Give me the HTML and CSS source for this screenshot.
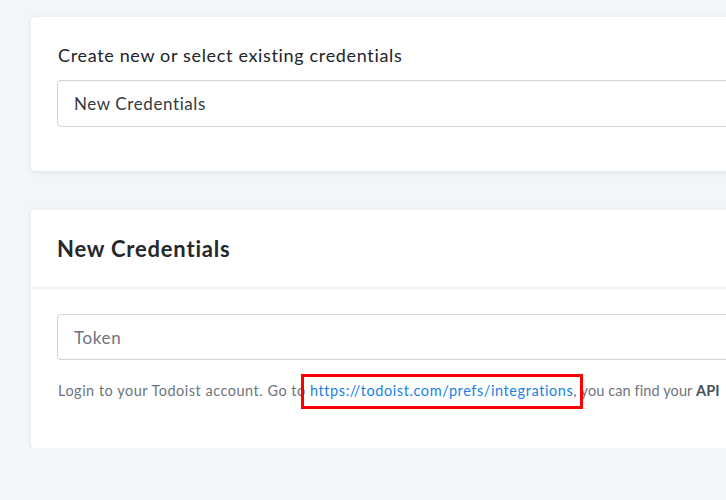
FILE: index.html
```html
<!DOCTYPE html>
<html>
<head>
<meta charset="utf-8">
<link rel="stylesheet" href="styles.css">
</head>
<body>
<div class="page">
  <section class="card card-select">
    <label class="field-label">Create new or select existing credentials</label>
    <div class="input">New Credentials</div>
  </section>
  <section class="card card-new">
    <header class="card-header">New Credentials</header>
    <div class="card-body">
      <div class="input placeholder">Token</div>
      <p class="help">Login to your Todoist account. Go to <span class="hl"><a href="#" class="link">https://todoist.com/prefs/integrations</a>,</span><span class="tail"> you can find your <b>API</b></span></p>
    </div>
  </section>
</div>
</body>
</html>
```
FILE: styles.css
```css
html, body {
  margin: 0;
  padding: 0;
  background: #f3f6f9;
  overflow: hidden;
  font-family: "Lato", "Open Sans", sans-serif;
}
.page {
  padding: 17px 0 0 31px;
  width: 900px;
}
.card {
  background: #fff;
  border-radius: 4px;
  box-shadow: 0 1px 5px rgba(40, 50, 70, 0.12);
}
.card-select {
  padding: 26px 26px 44px 26px;
  margin-bottom: 39px;
}
.field-label {
  display: block;
  font-size: 18px;
  line-height: 24px;
  letter-spacing: 0.66px;
  color: #212529;
  margin-bottom: 13px;
  padding-left: 1px;
}
.input {
  box-sizing: border-box;
  height: 47px;
  border: 1px solid #ced4da;
  border-radius: 4px;
  padding: 0 16px;
  display: flex;
  align-items: center;
  font-size: 17px;
  letter-spacing: 0.6px;
  color: #343a40;
}
.input.placeholder {
  color: #6c757d;
  height: 46px;
}
.card-header {
  height: 77px;
  display: flex;
  align-items: center;
  padding: 0 26px;
  font-size: 22px;
  letter-spacing: 0.8px;
  font-weight: 700;
  color: #25282c;
  border-bottom: 2px solid #ebf3fb;
}
.card-body {
  padding: 25px 26px 40px 26px;
}
.help {
  margin: 14px 0 0 1px;
  font-size: 14.5px;
  line-height: 34px;
  letter-spacing: 0.5px;
  color: #6c757d;
  white-space: nowrap;
}
.help b {
  color: #495057;
}
.tail {
  letter-spacing: 0.1px;
}
.hl {
  position: relative;
}
.hl::after {
  content: "";
  position: absolute;
  left: -9px;
  right: -6px;
  top: -8px;
  bottom: -10px;
  border: 3px solid #ff0000;
}
.link {
  color: #1a7fe8;
  letter-spacing: 0.58px;
  text-decoration: none;
}
```
